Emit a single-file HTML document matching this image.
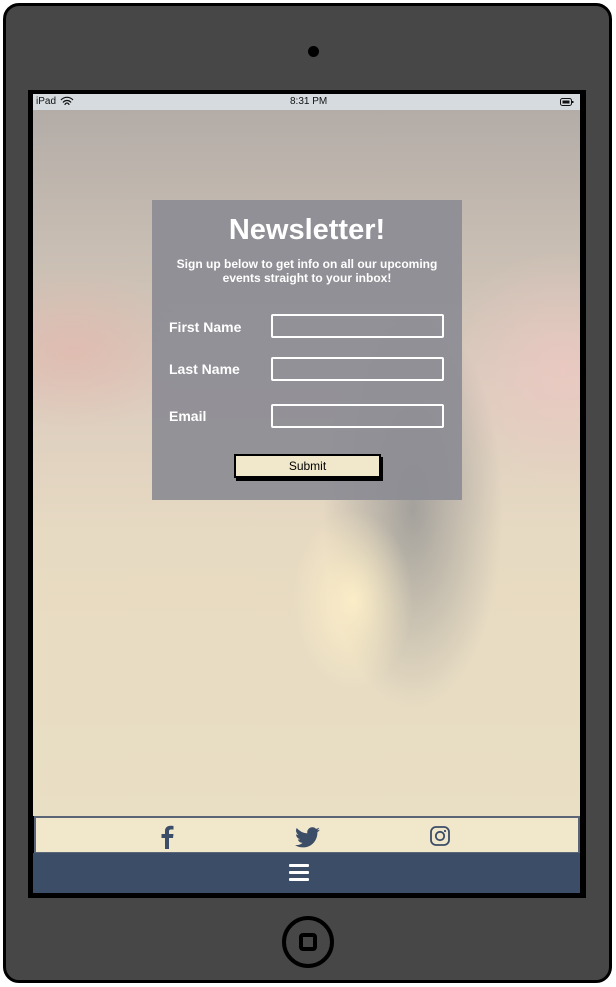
<!DOCTYPE html>
<html><head><style>
*{margin:0;padding:0;box-sizing:border-box}
body{width:616px;height:987px;background:#fff;position:relative;overflow:hidden;font-family:"Liberation Sans",sans-serif}
.dev{position:absolute;left:3px;top:3px;width:609px;height:980px;background:#474747;border:3px solid #000;border-radius:16px}
.cam{position:absolute;left:302px;top:40px;width:11px;height:11px;border-radius:50%;background:#000}
.frame{position:absolute;left:28px;top:90px;width:558px;height:808px;background:#000}
.status{position:absolute;left:33px;top:94px;width:547px;height:16px;background:#d5dbdf;font-size:10px;color:#111}
.bg{position:absolute;left:33px;top:110px;width:547px;height:706px;overflow:hidden;
background:
radial-gradient(ellipse 60px 90px at 320px 490px,rgba(255,240,200,.9),rgba(255,240,200,0)),
radial-gradient(ellipse 90px 200px at 380px 400px,rgba(110,115,125,.55),rgba(110,115,125,0)),
radial-gradient(ellipse 120px 80px at 40px 240px,rgba(230,180,170,.6),rgba(230,180,170,0)),
radial-gradient(ellipse 120px 120px at 530px 260px,rgba(240,200,195,.7),rgba(240,200,195,0)),
linear-gradient(180deg,#b3aca7 0%,#c9beb3 20%,#dccdbf 40%,#e7dac2 60%,#e9dfc4 100%)}
.panel{position:absolute;left:152px;top:200px;width:310px;height:300px;background:rgba(140,140,148,.92);color:#fff;text-align:center}
.panel h1{font-size:29px;font-weight:bold;margin-top:14px;letter-spacing:0}
.panel p{font-size:12px;font-weight:bold;line-height:14px;margin-top:10px}
.lbl{position:absolute;left:17px;font-size:14px;font-weight:bold}
.inp{position:absolute;left:119px;width:173px;height:24px;border:2px solid #fff;border-radius:2px}
.btn{position:absolute;left:82px;top:254px;width:147px;height:24px;background:#f1e8cc;border:2px solid #000;box-shadow:2px 3px 0 #000;color:#000;font-size:12px;line-height:20px}
.social{position:absolute;left:34px;top:816px;width:546px;height:38px;background:#f1e8cc;border:2px solid #5a6578}
.nav{position:absolute;left:33px;top:853px;width:547px;height:40px;background:#3c4d67}
.home{position:absolute;left:282px;top:916px;width:52px;height:52px;border:4px solid #000;border-radius:50%}
.home div{position:absolute;left:13px;top:13px;width:18px;height:18px;border:4px solid #000;border-radius:4px}
</style></head><body>
<div class="dev"><div class="cam"></div></div>
<div class="frame"></div>
<div class="status"><span style="position:absolute;left:3px;top:2px">iPad</span>
<svg style="position:absolute;left:27px;top:2px" width="14" height="11" viewBox="0 0 14 11"><path d="M1 4a8 8 0 0 1 12 0M3 6.5a5 5 0 0 1 8 0M5 9a2 2 0 0 1 4 0" stroke="#111" fill="none" stroke-width="1.2"/></svg>
<span style="position:absolute;left:257px;top:2px">8:31 PM</span>
<svg style="position:absolute;left:527px;top:4px" width="14" height="8"><rect x=".5" y=".5" width="11" height="7" rx="2" fill="none" stroke="#111"/><rect x="2.5" y="2.5" width="7" height="3" fill="#111"/><rect x="12" y="3" width="1.5" height="2" fill="#111"/></svg></div>
<div class="bg"></div>
<div class="panel">
<h1>Newsletter!</h1>
<p>Sign up below to get info on all our upcoming<br>events straight to your inbox!</p>
<div class="lbl" style="top:119px">First Name</div>
<div class="lbl" style="top:161px">Last Name</div>
<div class="lbl" style="top:208px">Email</div>
<div class="inp" style="top:114px"></div>
<div class="inp" style="top:157px"></div>
<div class="inp" style="top:204px"></div>
<div class="btn">Submit</div>
</div>
<div class="social">
<svg style="position:absolute;left:124px;top:7px" width="14" height="24" viewBox="0 0 14 24"><path d="M9 24V13h4l.5-4H9V6.5c0-1.2.4-2 2-2h2.5V1C13 1 11.8.8 10.5.8 7.5.8 5 2.6 5 6v3H1.5v4H5v11z" fill="#3c4d67"/></svg>
<svg style="position:absolute;left:259px;top:9px" width="25" height="21" viewBox="0 0 24 20"><path d="M24 2.4a10 10 0 0 1-2.8.8A5 5 0 0 0 23.3.5a10 10 0 0 1-3.1 1.2A4.9 4.9 0 0 0 11.8 6 14 14 0 0 1 1.7.9a4.9 4.9 0 0 0 1.5 6.6A4.900 4.900 0 0 1 1 6.9a4.9 4.9 0 0 0 3.9 4.8 5 5 0 0 1-2.2.1 4.900 4.900 0 0 0 4.600 3.400A9.900 9.900 0 0 1 0 17.300 14 14 0 0 0 7.500 19.500c9.100 0 14-7.500 14-14v-.600A10 10 0 0 0 24 2.400z" fill="#3c4d67"/></svg>
<svg style="position:absolute;left:394px;top:8px" width="20" height="20" viewBox="0 0 20 20"><rect x="1" y="1" width="18" height="18" rx="5" fill="none" stroke="#3c4d67" stroke-width="1.8"/><circle cx="10" cy="10" r="4.2" fill="none" stroke="#3c4d67" stroke-width="1.8"/><circle cx="15" cy="5" r="1.1" fill="#3c4d67"/></svg>
</div>
<div class="nav">
<svg style="position:absolute;left:256px;top:11px" width="20" height="18"><rect x="0" y="0" width="20" height="3" rx="1" fill="#fff"/><rect x="0" y="7" width="20" height="3" rx="1" fill="#fff"/><rect x="0" y="14" width="20" height="3" rx="1" fill="#fff"/></svg>
</div>
<div class="home"><div></div></div>
</body></html>
